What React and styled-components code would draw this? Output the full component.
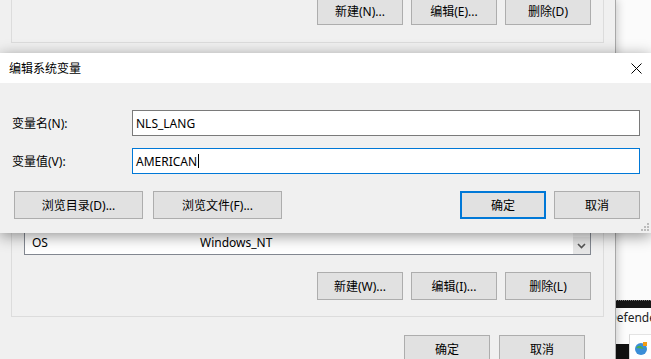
import React from "react";
import styled, { createGlobalStyle } from "styled-components";

const GlobalStyle = createGlobalStyle`
  html, body {
    margin: 0;
    padding: 0;
    background: #fff;
  }
  body {
    font-family: "Noto Sans", "Noto Sans CJK SC", sans-serif;
    font-size: 12px;
    color: #000;
    overflow: hidden;
  }
`;

const Screen = styled.div`
  position: relative;
  display: flex;
  width: 651px;
  height: 359px;
  overflow: hidden;
`;

/* the environment variables window behind */
const BackWindow = styled.div`
  position: relative;
  z-index: 1;
  flex: 0 0 616px;
  box-sizing: border-box;
  display: flex;
  flex-direction: column;
  background: #f0f0f0;
  border-right: 1px solid #a8a8a8;
  box-shadow: 2px 0 8px rgba(0, 0, 0, 0.18);
`;

const GroupBox = styled.div`
  margin: ${({ $top }) => $top}px 11px 0 11px;
  border: 1px solid #dcdcdc;
  ${({ $cut }) => $cut && "border-top: none;"}
  padding: ${({ $padTop }) => $padTop}px 12px ${({ $padBottom }) => $padBottom}px;
  display: flex;
  flex-direction: column;
`;

const ButtonRow = styled.div`
  display: flex;
  justify-content: flex-end;
  gap: ${({ $gap }) => $gap || 8}px;
  margin-top: ${({ $top }) => $top || 0}px;
  padding-right: ${({ $right }) => $right || 0}px;
`;

const Button = styled.div`
  box-sizing: border-box;
  width: ${({ $w }) => $w || 86}px;
  height: 28px;
  display: flex;
  align-items: center;
  justify-content: center;
  background: #e1e1e1;
  border: ${({ $primary }) => ($primary ? "2px solid #0078d7" : "1px solid #adadad")};
  color: #000;
  font-size: 12px;
  white-space: nowrap;
`;

const ListBox = styled.div`
  box-sizing: border-box;
  height: 175px;
  display: flex;
  background: #fff;
  border: 1px solid #828790;
`;

const ListRows = styled.div`
  flex: 1;
  display: flex;
  flex-direction: column;
  justify-content: flex-end;
  padding-bottom: 3px;
`;

const Row = styled.div`
  display: flex;
  align-items: center;
  height: 18px;
`;

const NameCell = styled.div`
  width: 168px;
  padding-left: 7px;
`;

const ScrollBar = styled.div`
  width: 17px;
  display: flex;
  flex-direction: column;
  justify-content: flex-end;
  background: #f0f0f0;
`;

const ScrollArrow = styled.div`
  height: 17px;
  display: flex;
  align-items: center;
  justify-content: center;
  background: #e6e6e6;
`;

/* the window seen at the right edge */
const SideWindow = styled.div`
  flex: 1;
  display: flex;
  flex-direction: column;
  background: #fcfcfc;
  overflow: hidden;
`;

const SideTop = styled.div`
  height: 303px;
  background: #fbfbfb;
`;

const SideBar = styled.div`
  height: 8px;
  background: #161616;
  border-top: 1px dotted #777;
  box-sizing: border-box;
`;

const SideCaption = styled.div`
  height: 22px;
  margin-left: -8px;
  line-height: 20px;
  color: #222;
  white-space: nowrap;
`;

const SideBottom = styled.div`
  flex: 1;
  display: flex;
`;

const SideBlack = styled.div`
  width: 13px;
  margin-top: 14px;
  background: #111;
`;

const SideCard = styled.div`
  flex: 1;
  margin-top: 4px;
  border-left: 1px solid #d8d8d8;
  border-top: 1px solid #e4e4e4;
  padding: 6px 0 0 3px;
  background: #fff;
`;

/* the edit dialog */
const EditDialog = styled.div`
  position: absolute;
  left: 0;
  top: 53px;
  z-index: 2;
  width: 651px;
  height: 180px;
  display: flex;
  flex-direction: column;
  background: #f0f0f0;
  box-shadow: 0 3px 14px rgba(0, 0, 0, 0.42);
`;

const TitleBar = styled.div`
  height: 30px;
  display: flex;
  align-items: center;
  justify-content: space-between;
  padding: 0 9px 0 9px;
  background: #fff;
`;

const Title = styled.div`
  font-size: 12px;
  color: #000;
`;

const Body = styled.div`
  flex: 1;
  position: relative;
  display: flex;
  flex-direction: column;
  padding: 27px 11px 14px 12px;
`;

const Field = styled.div`
  display: flex;
  align-items: center;
  height: 26px;
  margin-top: ${({ $top }) => $top || 0}px;
`;

const Label = styled.div`
  width: 120px;
`;

const Input = styled.div`
  flex: 1;
  box-sizing: border-box;
  height: 26px;
  display: flex;
  align-items: center;
  padding-left: 3px;
  background: #fff;
  border: 1px solid ${({ $focus }) => ($focus ? "#0078d7" : "#7a7a7a")};
`;

const Caret = styled.span`
  display: inline-block;
  width: 1px;
  height: 14px;
  margin-left: 1px;
  background: #000;
`;

const DialogButtons = styled.div`
  display: flex;
  justify-content: space-between;
  margin-top: 17px;
  padding-left: 2px;
`;

const Group = styled.div`
  display: flex;
  gap: ${({ $gap }) => $gap}px;
`;

const Grip = styled.svg`
  position: absolute;
  right: 1px;
  bottom: 1px;
`;

const CloseIcon = () => (
  <svg width="11" height="11" viewBox="0 0 11 11">
    <path d="M0.5 0.5 L10.5 10.5 M10.5 0.5 L0.5 10.5" stroke="#000" strokeWidth="1" fill="none" />
  </svg>
);

const Chevron = () => (
  <svg width="9" height="6" viewBox="0 0 9 6">
    <path d="M1 1 L4.5 4.5 L8 1" stroke="#555" strokeWidth="1.6" fill="none" />
  </svg>
);

const AppIcon = () => (
  <svg width="16" height="14" viewBox="0 0 16 14">
    <circle cx="8" cy="8" r="6" fill="#3b8ed8" />
    <path d="M3 7 Q6 3 9 6 T14 8" fill="#4caf50" />
    <rect x="10" y="1" width="4" height="4" fill="#f39c12" />
  </svg>
);

const App = () => (
  <>
    <GlobalStyle />
    <Screen>
      <BackWindow>
        <GroupBox $top={-3} $cut $padTop={0} $padBottom={17}>
          <ButtonRow>
            <Button>新建(N)...</Button>
            <Button>编辑(E)...</Button>
            <Button>删除(D)</Button>
          </ButtonRow>
        </GroupBox>

        <GroupBox $top={17} $padTop={19} $padBottom={16}>
          <ListBox>
            <ListRows>
              <Row>
                <NameCell>NUMBER_OF_PROCESSORS</NameCell>
                <div>4</div>
              </Row>
              <Row>
                <NameCell>OS</NameCell>
                <div>Windows_NT</div>
              </Row>
            </ListRows>
            <ScrollBar>
              <ScrollArrow>
                <Chevron />
              </ScrollArrow>
            </ScrollBar>
          </ListBox>
          <ButtonRow $top={17}>
            <Button>新建(W)...</Button>
            <Button>编辑(I)...</Button>
            <Button>删除(L)</Button>
          </ButtonRow>
        </GroupBox>

        <ButtonRow $top={18} $gap={9} $right={30}>
          <Button>确定</Button>
          <Button>取消</Button>
        </ButtonRow>
      </BackWindow>

      <SideWindow>
        <SideTop />
        <SideBar />
        <SideCaption>Defende</SideCaption>
        <SideBottom>
          <SideBlack />
          <SideCard>
            <AppIcon />
          </SideCard>
        </SideBottom>
      </SideWindow>

      <EditDialog>
        <TitleBar>
          <Title>编辑系统变量</Title>
          <CloseIcon />
        </TitleBar>
        <Body>
          <Field>
            <Label>变量名(N):</Label>
            <Input>NLS_LANG</Input>
          </Field>
          <Field $top={12}>
            <Label>变量值(V):</Label>
            <Input $focus>
              AMERICAN
              <Caret />
            </Input>
          </Field>
          <DialogButtons>
            <Group $gap={10}>
              <Button $w={129}>浏览目录(D)...</Button>
              <Button $w={129}>浏览文件(F)...</Button>
            </Group>
            <Group $gap={8}>
              <Button $primary>确定</Button>
              <Button>取消</Button>
            </Group>
          </DialogButtons>
          <Grip width="9" height="9" viewBox="0 0 9 9">
            <rect x="6" y="0" width="2" height="2" fill="#bcbcbc" />
            <rect x="3" y="3" width="2" height="2" fill="#bcbcbc" />
            <rect x="6" y="3" width="2" height="2" fill="#bcbcbc" />
            <rect x="0" y="6" width="2" height="2" fill="#bcbcbc" />
            <rect x="3" y="6" width="2" height="2" fill="#bcbcbc" />
            <rect x="6" y="6" width="2" height="2" fill="#bcbcbc" />
          </Grip>
        </Body>
      </EditDialog>
    </Screen>
  </>
);

export default App;
